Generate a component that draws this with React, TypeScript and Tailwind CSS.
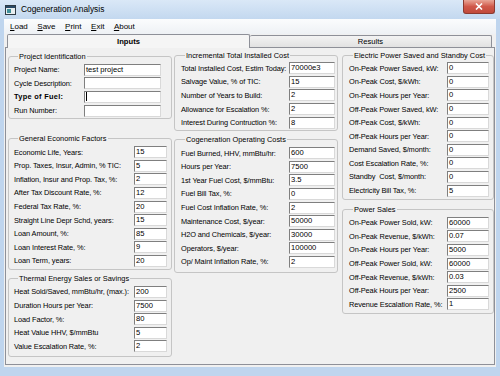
import React from "react";

type Field = { label: string; value?: string; bold?: boolean; caret?: boolean };

const projectFields: Field[] = [
    { label: "Project Name:", value: "test project" },
    { label: "Cycle Description:" },
    { label: "Type of Fuel:", bold: true, caret: true },
    { label: "Run Number:" },
];

const economicFields: Field[] = [
    { label: "Economic Life, Years:", value: "15" },
    { label: "Prop. Taxes, Insur, Admin, % TIC:", value: "5" },
    { label: "Inflation, Insur and Prop. Tax, %:", value: "2" },
    { label: "After Tax Discount Rate, %:", value: "12" },
    { label: "Federal Tax Rate, %:", value: "20" },
    { label: "Straight Line Depr Schd, years:", value: "15" },
    { label: "Loan Amount, %:", value: "85" },
    { label: "Loan Interest Rate, %:", value: "9" },
    { label: "Loan Term, years:", value: "20" },
];

const thermalFields: Field[] = [
    { label: "Heat Sold/Saved, mmBtu/hr, (max.):", value: "200" },
    { label: "Duration Hours per Year:", value: "7500" },
    { label: "Load Factor, %:", value: "80" },
    { label: "Heat Value HHV, $/mmBtu", value: "5" },
    { label: "Value Escalation Rate, %:", value: "2" },
];

const installedFields: Field[] = [
    { label: "Total Installed Cost, Estim Today:", value: "70000e3" },
    { label: "Salvage Value, % of TIC:", value: "15" },
    { label: "Number of Years to Build:", value: "2" },
    { label: "Allowance for Escalation %:", value: "2" },
    { label: "Interest During Contruction %:", value: "8" },
];

const operatingFields: Field[] = [
    { label: "Fuel Burned, HHV, mmBtu/hr:", value: "600" },
    { label: "Hours per Year:", value: "7500" },
    { label: "1st Year Fuel Cost, $/mmBtu:", value: "3.5" },
    { label: "Fuel Bill Tax, %:", value: "0" },
    { label: "Fuel Cost Inflation Rate, %:", value: "2" },
    { label: "Maintenance Cost, $/year:", value: "50000" },
    { label: "H2O and Chemicals, $/year:", value: "30000" },
    { label: "Operators, $/year:", value: "100000" },
    { label: "Op/ Maint Inflation Rate, %:", value: "2" },
];

const electricFields: Field[] = [
    { label: "On-Peak Power Saved, kW:", value: "0" },
    { label: "On-Peak Cost, $/kWh:", value: "0" },
    { label: "On-Peak Hours per Year:", value: "0" },
    { label: "Off-Peak Power Saved, kW:", value: "0" },
    { label: "Off-Peak Cost, $/kWh:", value: "0" },
    { label: "Off-Peak Hours per Year:", value: "0" },
    { label: "Demand Saved, $/month:", value: "0" },
    { label: "Cost Escalation Rate, %:", value: "0" },
    { label: "Standby  Cost, $/month:", value: "0" },
    { label: "Electricity Bill Tax, %:", value: "5" },
];

const salesFields: Field[] = [
    { label: "On-Peak Power Sold, kW:", value: "60000" },
    { label: "On-Peak Revenue, $/kWh:", value: "0.07" },
    { label: "On-Peak Hours per Year:", value: "5000" },
    { label: "Off-Peak Power Sold, kW:", value: "60000" },
    { label: "Off-Peak Revenue, $/kWh:", value: "0.03" },
    { label: "Off-Peak Hours per Year:", value: "2500" },
    { label: "Revenue Escalation Rate, %:", value: "1" },
];

function Group({
    title,
    fields,
    inputWidth,
    className,
}: {
    title: string;
    fields: Field[];
    inputWidth: string;
    className: string;
}) {
    return (
        <fieldset
            className={`border border-[#c5c5c5] rounded-[3px] pt-[2px] ${className}`}
        >
            <legend className="ml-[4px] px-[1px] leading-[9px]">{title}</legend>
            {fields.map((f) => (
                <div key={f.label} className="flex items-center h-[13.6px]">
                    <div
                        className={`flex-1 whitespace-pre ${f.bold ? "font-bold tracking-[0.3px]" : "tracking-[-0.1px]"}`}
                    >
                        {f.label}
                    </div>
                    <div
                        className={`${inputWidth} h-[12px] bg-white border border-t-[#7f7f7f] border-l-[#7f7f7f] border-r-[#d9d9d9] border-b-[#d9d9d9] flex items-center pl-[1px] leading-[10px] text-[7.6px] whitespace-nowrap overflow-hidden`}
                    >
                        {f.caret && <div className="w-[1px] h-[9px] bg-black" />}
                        {f.value}
                    </div>
                </div>
            ))}
        </fieldset>
    );
}

export default function App() {
    return (
        <div className="w-[500px] h-[376px] flex flex-col bg-[#bfd5ee] font-['Liberation_Sans',Arial,sans-serif] text-black text-[7.4px]">
            <div className="h-[19px] flex items-center bg-gradient-to-b from-[#dae8f7] to-[#c3d8ef] relative">
                <svg width="11" height="10" viewBox="0 0 11 10" className="ml-[5px]">
                    <rect x="0.5" y="0.5" width="10" height="9" fill="#e9eef0" stroke="#2f3b45" />
                    <rect x="1" y="1" width="9" height="2" fill="#2b4a66" />
                    <rect x="2" y="4" width="4" height="4" fill="#3f8f9a" />
                </svg>
                <div className="ml-[5px] text-[8.4px]">Cogeneration Analysis</div>
                <div className="absolute right-[5px] top-0 w-[32px] h-[14px] rounded-b-[3px] border border-[#8b3a30] border-t-0 bg-gradient-to-b from-[#e8a597] via-[#d0584a] to-[#c14a3a] flex items-center justify-center">
                    <svg width="8" height="7" viewBox="0 0 8 7">
                        <path d="M1 0.5 L7 6.5 M7 0.5 L1 6.5" stroke="white" strokeWidth="1.6" />
                    </svg>
                </div>
            </div>
            <div className="flex-1 mx-[4px] mb-[9px] flex flex-col bg-[#f0f0f0]">
                <div className="h-[15px] flex items-center gap-[9.5px] pl-[6px] text-[8px] bg-gradient-to-b from-[#fbfcfd] to-[#eef1f5]">
                    <div>
                        <span className="underline">L</span>oad
                    </div>
                    <div>
                        <span className="underline">S</span>ave
                    </div>
                    <div>
                        <span className="underline">P</span>rint
                    </div>
                    <div>
                        <span className="underline">E</span>xit
                    </div>
                    <div>
                        <span className="underline">A</span>bout
                    </div>
                </div>
                <div className="flex-1 flex flex-col px-[1px] pb-[2px]">
                    <div className="h-[13px] flex items-end pl-[2px]">
                        <div className="w-[243px] h-[14px] -mb-[1px] bg-[#f5f5f5] border border-b-0 border-[#8e9098] rounded-t-[2px] flex items-center justify-center font-bold text-[7.6px] relative z-10">
                            Inputs
                        </div>
                        <div className="w-[242px] h-[12px] bg-gradient-to-b from-[#f3f3f3] to-[#e2e2e2] border border-b-0 border-l-0 border-[#8e9098] rounded-t-[2px] flex items-center justify-center text-[7.6px]">
                            Results
                        </div>
                    </div>
                    <div className="flex-1 border border-[#8e9098] bg-[#f0f0f0] flex pl-[2px] pt-[2px]">
                        <div className="w-[164px] flex flex-col">
                            <Group
                                title="Project Identification"
                                fields={projectFields}
                                inputWidth="w-[77px]"
                                className="mt-[2px] pl-[5px] pr-[10px] pb-[1px]"
                            />
                            <Group
                                title="General Economic Factors"
                                fields={economicFields}
                                inputWidth="w-[33px]"
                                className="mt-[15px] pl-[5px] pr-[4px] pb-[1px]"
                            />
                            <Group
                                title="Thermal Energy Sales or Savings"
                                fields={thermalFields}
                                inputWidth="w-[33px]"
                                className="mt-[4.5px] pl-[5px] pr-[4px] pb-[2.5px]"
                            />
                        </div>
                        <div className="w-[164px] ml-[2px] flex flex-col">
                            <Group
                                title="Incremental Total Installed Cost"
                                fields={installedFields}
                                inputWidth="w-[46px]"
                                className="mt-[0.5px] pl-[6px] pr-[2px] pb-[1px]"
                            />
                            <Group
                                title="Cogeneration Operating Costs"
                                fields={operatingFields}
                                inputWidth="w-[46px]"
                                className="mt-[4px] pl-[6px] pr-[2px] pb-[3px]"
                            />
                        </div>
                        <div className="w-[152px] ml-[4px] flex flex-col">
                            <Group
                                title="Electric Power Saved and Standby Cost"
                                fields={electricFields}
                                inputWidth="w-[42px]"
                                className="mt-[0.5px] pl-[6px] pr-[4px] pb-[2px]"
                            />
                            <Group
                                title="Power Sales"
                                fields={salesFields}
                                inputWidth="w-[42px]"
                                className="mt-[4.5px] pl-[6px] pr-[4px] pb-[2px]"
                            />
                        </div>
                    </div>
                </div>
            </div>
        </div>
    );
}
